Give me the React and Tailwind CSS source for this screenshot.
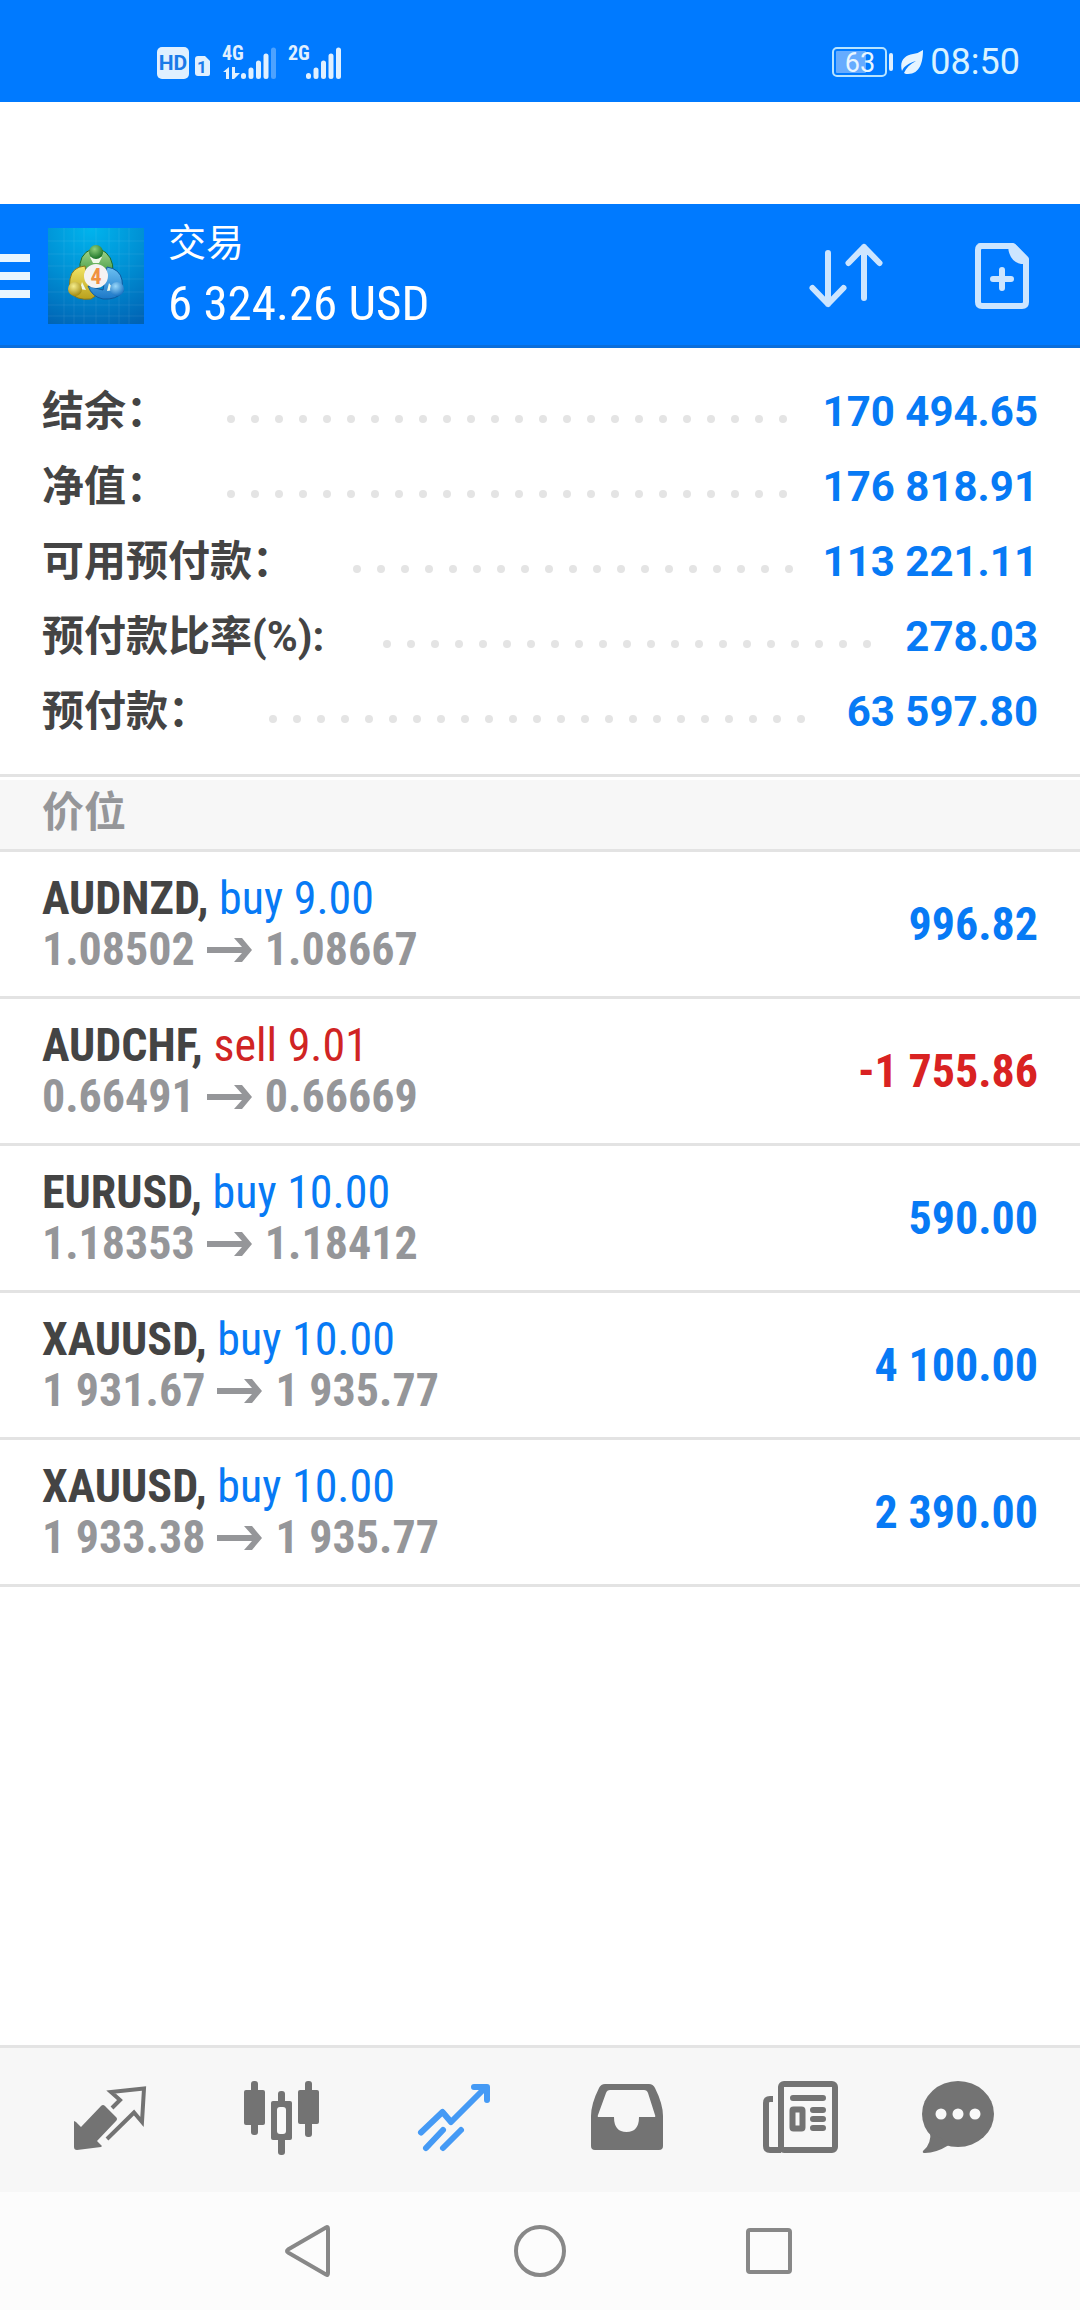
import React from 'react';

const SUMMARY = [
  { label: '结余：', value: '170 494.65' },
  { label: '净值：', value: '176 818.91' },
  { label: '可用预付款：', value: '113 221.11' },
  { label: '预付款比率(%):', value: '278.03' },
  { label: '预付款：', value: '63 597.80' },
];

const POSITIONS = [
  { id: 1, symbol: 'AUDNZD', side: 'buy', volume: '9.00', open: '1.08502', current: '1.08667', profit: '996.82' },
  { id: 2, symbol: 'AUDCHF', side: 'sell', volume: '9.01', open: '0.66491', current: '0.66669', profit: '-1 755.86' },
  { id: 3, symbol: 'EURUSD', side: 'buy', volume: '10.00', open: '1.18353', current: '1.18412', profit: '590.00' },
  { id: 4, symbol: 'XAUUSD', side: 'buy', volume: '10.00', open: '1 931.67', current: '1 935.77', profit: '4 100.00' },
  { id: 5, symbol: 'XAUUSD', side: 'buy', volume: '10.00', open: '1 933.38', current: '1 935.77', profit: '2 390.00' },
];

const DOTS = Array.from({ length: 40 }, (_, i) => i);

const StatusBar = () => (
  <div className="flex h-[102px] items-center justify-between bg-[#007aff] pt-[22px] pr-[60px] pl-[156px]">
    <div className="flex items-center">
      {/* HD badge, SIM and signal strength */}
      <svg width="188" height="40" viewBox="0 0 188 40" fill="#e0f0ff" aria-hidden="true">
        <rect x="1" y="5" width="32" height="32" rx="5" />
        <text x="17" y="28" textAnchor="middle" fontSize="21" fill="#1a7ae8" className="font-['Roboto',sans-serif] font-bold">HD</text>
        <path d="M42 14h7l5 5v13q0 2-2 2H42q-3 0-3-3V17q0-3 3-3z" />
        <text x="46" y="31" textAnchor="middle" fontSize="17" fill="#1a7ae8" className="font-['Roboto',sans-serif] font-bold">1</text>
        <text x="66" y="18" fontSize="20" className="font-['Roboto_Condensed','Liberation_Sans_Narrow',sans-serif] font-bold">4G</text>
        <path d="M67 30l6-5v12h-3v-7zM76 25h3v6h5l-6 6h-2z" />
        <g stroke="#e0f0ff" strokeWidth="5" strokeLinecap="round">
          <path d="M87.500 33.500v1M95 28v6.500M102.500 21v13.500M110 14v20.500" />
          <path d="M117.500 8v26.500" stroke="#4da2ff" />
          <path d="M152.500 33.500v1M160 28v6.500M167.500 21v13.500M175 14v20.500M182.500 8v26.500" />
        </g>
        <text x="132" y="18" fontSize="20" className="font-['Roboto_Condensed','Liberation_Sans_Narrow',sans-serif] font-bold">2G</text>
      </svg>
    </div>
    <div className="flex items-center gap-1.5 text-[#d9f2ff]">
      <svg width="62" height="32" viewBox="0 0 62 32" aria-hidden="true">
        <rect x="1" y="2" width="53" height="28" rx="4" fill="none" stroke="#b8e4ff" strokeWidth="2" />
        <rect x="4" y="5" width="30" height="22" rx="1" fill="#66acff" />
        <rect x="57" y="7" width="4" height="18" rx="2" fill="#e0f0ff" />
        <text x="28" y="26" textAnchor="middle" fontSize="27" fill="#e8f6ff" className="font-['Roboto',sans-serif]">63</text>
      </svg>
      <svg width="24" height="26" viewBox="0 0 24 26" fill="#e6f4ff" aria-hidden="true">
        <path d="M23 1c0 12-3 24-15 24-1 0-3 0-4-1 2-5 6-9 12-12C9 14 4 17 2 22-1 12 5 6 13 5q6-1 10-4z" />
      </svg>
      <span className="font-['Roboto',sans-serif] text-[36px] leading-10">08:50</span>
    </div>
  </div>
);

const AppLogo = () => (
  <svg width="96" height="96" viewBox="0 0 96 96" className="shrink-0" aria-hidden="true">
    <defs>
      <radialGradient id="logoBg" cx="0.45" cy="0" r="1.1">
        <stop offset="0" stopColor="#00b4ee" />
        <stop offset="0.5" stopColor="#0090d4" />
        <stop offset="1" stopColor="#0063b4" />
      </radialGradient>
      <linearGradient id="logoGreen" x1="0" y1="0" x2="0" y2="1">
        <stop offset="0" stopColor="#a5d68c" />
        <stop offset="1" stopColor="#2f8f35" />
      </linearGradient>
      <linearGradient id="logoYellow" x1="0" y1="0" x2="0" y2="1">
        <stop offset="0" stopColor="#f3e566" />
        <stop offset="1" stopColor="#b9a01c" />
      </linearGradient>
      <linearGradient id="logoBlue" x1="0" y1="0" x2="0" y2="1">
        <stop offset="0" stopColor="#6cc0f2" />
        <stop offset="1" stopColor="#1c78c8" />
      </linearGradient>
      <radialGradient id="ballGreen" cx="0.4" cy="0.3" r="0.7">
        <stop offset="0" stopColor="#8fd07c" />
        <stop offset="1" stopColor="#1c7428" />
      </radialGradient>
      <radialGradient id="ballYellow" cx="0.4" cy="0.3" r="0.7">
        <stop offset="0" stopColor="#f6ee8c" />
        <stop offset="1" stopColor="#a58c14" />
      </radialGradient>
      <radialGradient id="ballBlue" cx="0.4" cy="0.3" r="0.7">
        <stop offset="0" stopColor="#9ad8fa" />
        <stop offset="1" stopColor="#1a74c4" />
      </radialGradient>
    </defs>
    <rect width="96" height="96" fill="url(#logoBg)" />
    <path
      d="M16 0v96M26 0v96M36 0v96M48 0v96M61 0v96M71 0v96M81 0v96M0 13h96M0 26h96M0 38h96M0 51h96M0 64h96M0 77h96M0 88h96"
      stroke="#fff"
      strokeOpacity="0.07"
    />
    <path d="M32 44q-2-18 12-23h8q14 6 13 24l-8 6-9-14-10 8z" fill="url(#logoGreen)" stroke="#1d6b2c" />
    <path d="M37 38q-13 1-15 13l-1 12q7 10 22 8l10-7-13-8z" fill="url(#logoYellow)" stroke="#87761a" />
    <path d="M59 39q13 2 15 13l1 12q-7 8-20 7-11-2-15-13l15 4z" fill="url(#logoBlue)" stroke="#0e5a9e" />
    <path d="M42 29h12l-3 6h-6zM34 54l4 8-6-1zM61 55l-2 8 7-1z" fill="#eef8e8" />
    <circle cx="48" cy="24" r="7" fill="url(#ballGreen)" />
    <circle cx="27" cy="61" r="7" fill="url(#ballYellow)" />
    <circle cx="69" cy="61" r="7" fill="url(#ballBlue)" />
    <circle cx="48" cy="48" r="12" fill="#f4f2f2" />
    <text x="48" y="56" textAnchor="middle" fontSize="22" fill="#f09040" className="font-['Roboto_Condensed',sans-serif] font-bold">4</text>
  </svg>
);

const Header = () => (
  <header className="flex h-36 items-center bg-[#007aff] text-white shadow-[inset_0_-3px_0_#0a6edb]">
    <button type="button" aria-label="菜单" className="flex w-12 flex-col gap-[10px]">
      <span className="h-2 w-[30px] bg-[#e8f6ff]" />
      <span className="h-2 w-[30px] bg-[#e8f6ff]" />
      <span className="h-2 w-[30px] bg-[#e8f6ff]" />
    </button>
    <AppLogo />
    <div className="ml-6 flex-1">
      <h1 className="font-['Noto_Sans_CJK_SC',sans-serif] text-[38px] leading-[56px]">交易</h1>
      <p className="font-['Roboto_Condensed','Liberation_Sans_Narrow',sans-serif] text-[49px] leading-[72px]">6 324.26 USD</p>
    </div>
    <div className="flex gap-[60px] pr-[30px] text-[#cce5ff]">
      <button type="button" aria-label="排序">
        <svg width="96" height="96" viewBox="0 0 96 96" fill="none" stroke="currentColor" strokeWidth="6" strokeLinecap="round" strokeLinejoin="round">
          <path d="M30 25v51M14.500 60L30 76l15.500-16M66 70V19M50.500 35L66 19l15.500 16" />
        </svg>
      </button>
      <button type="button" aria-label="新订单">
        <svg width="96" height="96" viewBox="0 0 96 96" fill="none" stroke="currentColor" strokeWidth="6" strokeLinecap="round" strokeLinejoin="round">
          <path d="M26 18h33l13 13v43q0 4-4 4H28q-4 0-4-4V22q0-4 4-4z" />
          <path d="M54 16h7l13 14v6h-7q-13-3-13-20z" fill="currentColor" stroke="none" />
          <path d="M48 42v18M39 51h18" />
        </svg>
      </button>
    </div>
  </header>
);

const SummaryRow = ({ label, value }) => (
  <div className="flex h-[75px] items-center text-[42px] leading-[75px]">
    <dt className="font-['Roboto','Noto_Sans_CJK_SC',sans-serif] font-bold whitespace-nowrap text-[#444]">{label}</dt>
    <dd className="contents">
      {/* dot leader, only whole dots are shown */}
      <span className="mt-[14px] mr-4 ml-[51px] flex h-2 flex-1 flex-wrap overflow-hidden" aria-hidden="true">
        {DOTS.map((i) => (
          <span key={i} className="flex h-2 w-6 justify-center">
            <span className="size-2 rounded-full bg-[#e4e4e4]" />
          </span>
        ))}
      </span>
      <span className="font-['Roboto',sans-serif] font-bold whitespace-nowrap text-[#077af5]">{value}</span>
    </dd>
  </div>
);

const PositionRow = ({ position }) => {
  const { symbol, side, volume, open, current, profit } = position;
  return (
    <li className="flex h-[147px] items-center justify-between border-b-3 border-[#e3e3e3] px-[42px] font-['Roboto_Condensed','Liberation_Sans_Narrow',sans-serif] text-[46px] leading-[51px]">
      <div>
        <p className="font-bold text-[#444]">
          {symbol},{' '}
          <span className={side === 'buy' ? 'font-normal text-[#077af5]' : 'font-normal text-[#d02424]'}>
            {side} {volume}
          </span>
        </p>
        <p className="flex items-center gap-3 font-bold text-[#959699]">
          {open}
          <svg width="46" height="26" viewBox="0 0 46 26" fill="currentColor" role="img" aria-label="至">
            <path d="M0 10h35l-8-9h8l10 12-10 12h-8l8-9H0z" />
          </svg>
          {current}
        </p>
      </div>
      <p className={profit.startsWith('-') ? 'font-bold text-[#d92222]' : 'font-bold text-[#077af5]'}>{profit}</p>
    </li>
  );
};

const QuotesIcon = () => (
  <svg width="96" height="96" viewBox="0 0 96 96" fill="currentColor">
    <path d="M12 49l2 1 5 5 20-21q2-2 4 0l11 11q2 2 0 4L35 69l5 5-1 1-24 3q-3 0-3-3z" />
    <path d="M50 36l8-8-9-8 33-3.500L80 50l-8-9.500L45 67" fill="none" stroke="currentColor" strokeWidth="4" />
  </svg>
);

const ChartIcon = () => (
  <svg width="96" height="96" viewBox="0 0 96 96" fill="currentColor">
    <rect x="17" y="9" width="7" height="54" rx="3" />
    <rect x="10" y="18" width="21" height="35" rx="2" />
    <rect x="71" y="9" width="7" height="56" rx="3" />
    <rect x="64" y="18" width="21" height="34" rx="2" />
    <rect x="44" y="19" width="7" height="64" rx="3" />
    <rect x="37" y="29" width="21" height="39" rx="2" />
    <rect x="43" y="35" width="9" height="27" rx="3" fill="#f9f9f9" />
  </svg>
);

const TradeIcon = () => (
  <svg width="96" height="96" viewBox="0 0 96 96" fill="none" stroke="currentColor" strokeWidth="6" strokeLinejoin="round">
    <path d="M15 60.500L36.500 40 45 50l34-34M68 15h13v13M20 76l17-18M37 76l18-18" strokeLinecap="round" />
  </svg>
);

const HistoryIcon = () => (
  <svg width="96" height="96" viewBox="0 0 96 96" fill="currentColor">
    <path
      fillRule="evenodd"
      d="M27 12h44q4 0 6 4 8 16 8 28v30q0 4-4 4H17q-4 0-4-4V44q0-12 8-28 2-4 6-4zM32 18q-3 0-4 3l-8 22q-1 2 1 2h15q0 15 12.500 15T61 45h15q2 0 1-2l-7-22q-1-3-4-3z"
    />
  </svg>
);

const NewsIcon = () => (
  <svg width="96" height="96" viewBox="0 0 96 96" fill="none" stroke="currentColor" strokeWidth="6">
    <rect x="31" y="12" width="54" height="66" rx="3" />
    <path d="M23 27h-3q-4 0-4 4v43q0 4 4 4h11" />
    <path d="M43 26h30M63 38h10M63 47h10M63 56h10" strokeLinecap="round" />
    <rect x="42.500" y="37.500" width="10" height="19" rx="1" />
  </svg>
);

// The bubble leans to the left of its cell
const MessagesIcon = () => (
  <svg width="96" height="96" viewBox="0 0 96 96" fill="currentColor">
    <ellipse cx="36" cy="42" rx="36" ry="33" />
    <path d="M8 58q2 14-7 21-1 2 2 2 11 0 24-8z" />
    <g fill="#f9f9f9">
      <circle cx="19" cy="42" r="5.500" />
      <circle cx="36" cy="42" r="5.500" />
      <circle cx="53" cy="42" r="5.500" />
    </g>
  </svg>
);

const TABS = [
  { label: '行情', Icon: QuotesIcon },
  { label: '图表', Icon: ChartIcon },
  { label: '交易', Icon: TradeIcon, active: true },
  { label: '历史', Icon: HistoryIcon },
  { label: '新闻', Icon: NewsIcon },
  { label: '消息', Icon: MessagesIcon },
];

const TabBar = () => (
  <nav className="grid h-[147px] grid-cols-6 border-t-3 border-[#e4e4e4] bg-[#f7f7f7] px-6">
    {TABS.map(({ label, Icon, active }) => (
      <button
        key={label}
        type="button"
        aria-label={label}
        aria-current={active ? 'page' : undefined}
        className={active ? 'flex items-center justify-center text-[#459af5]' : 'flex items-center justify-center text-[#737373]'}
      >
        <Icon />
      </button>
    ))}
  </nav>
);

const SystemNav = () => (
  <div className="flex h-[118px] items-center justify-center gap-[134px] bg-[#fcfcfc] text-[#888]">
    <button type="button" aria-label="返回">
      <svg width="96" height="96" viewBox="0 0 96 96" fill="none" stroke="currentColor" strokeWidth="4" strokeLinejoin="round">
        <path d="M64 24.500Q66 23 66 26v44q0 3-2 1.500L26 49.500q-2-1.500 0-3z" />
      </svg>
    </button>
    <button type="button" aria-label="主页">
      <svg width="96" height="96" viewBox="0 0 96 96" fill="none" stroke="currentColor" strokeWidth="4">
        <circle cx="48" cy="48" r="24" />
      </svg>
    </button>
    <button type="button" aria-label="最近任务">
      <svg width="96" height="96" viewBox="0 0 96 96" fill="none" stroke="currentColor" strokeWidth="4">
        <rect x="26" y="27" width="42" height="42" rx="2" />
      </svg>
    </button>
  </div>
);

const App = () => (
  <div className="flex min-h-screen flex-col bg-white">
    <StatusBar />
    <div className="h-[102px]" />
    <Header />
    <main className="flex-1">
      <dl className="border-b-3 border-[#e3e3e3] px-[42px] pt-[26px] pb-[25px]">
        {SUMMARY.map((row) => (
          <SummaryRow key={row.label} label={row.label} value={row.value} />
        ))}
      </dl>
      <h2 className="mt-[3px] h-[72px] border-b-3 border-[#e3e3e3] bg-[#f7f7f7] px-[42px] font-['Noto_Sans_CJK_SC',sans-serif] text-[42px] leading-[58px] font-bold text-[#959699]">
        价位
      </h2>
      <ul>
        {POSITIONS.map((position) => (
          <PositionRow key={position.id} position={position} />
        ))}
      </ul>
    </main>
    <TabBar />
    <SystemNav />
  </div>
);

export default App;
